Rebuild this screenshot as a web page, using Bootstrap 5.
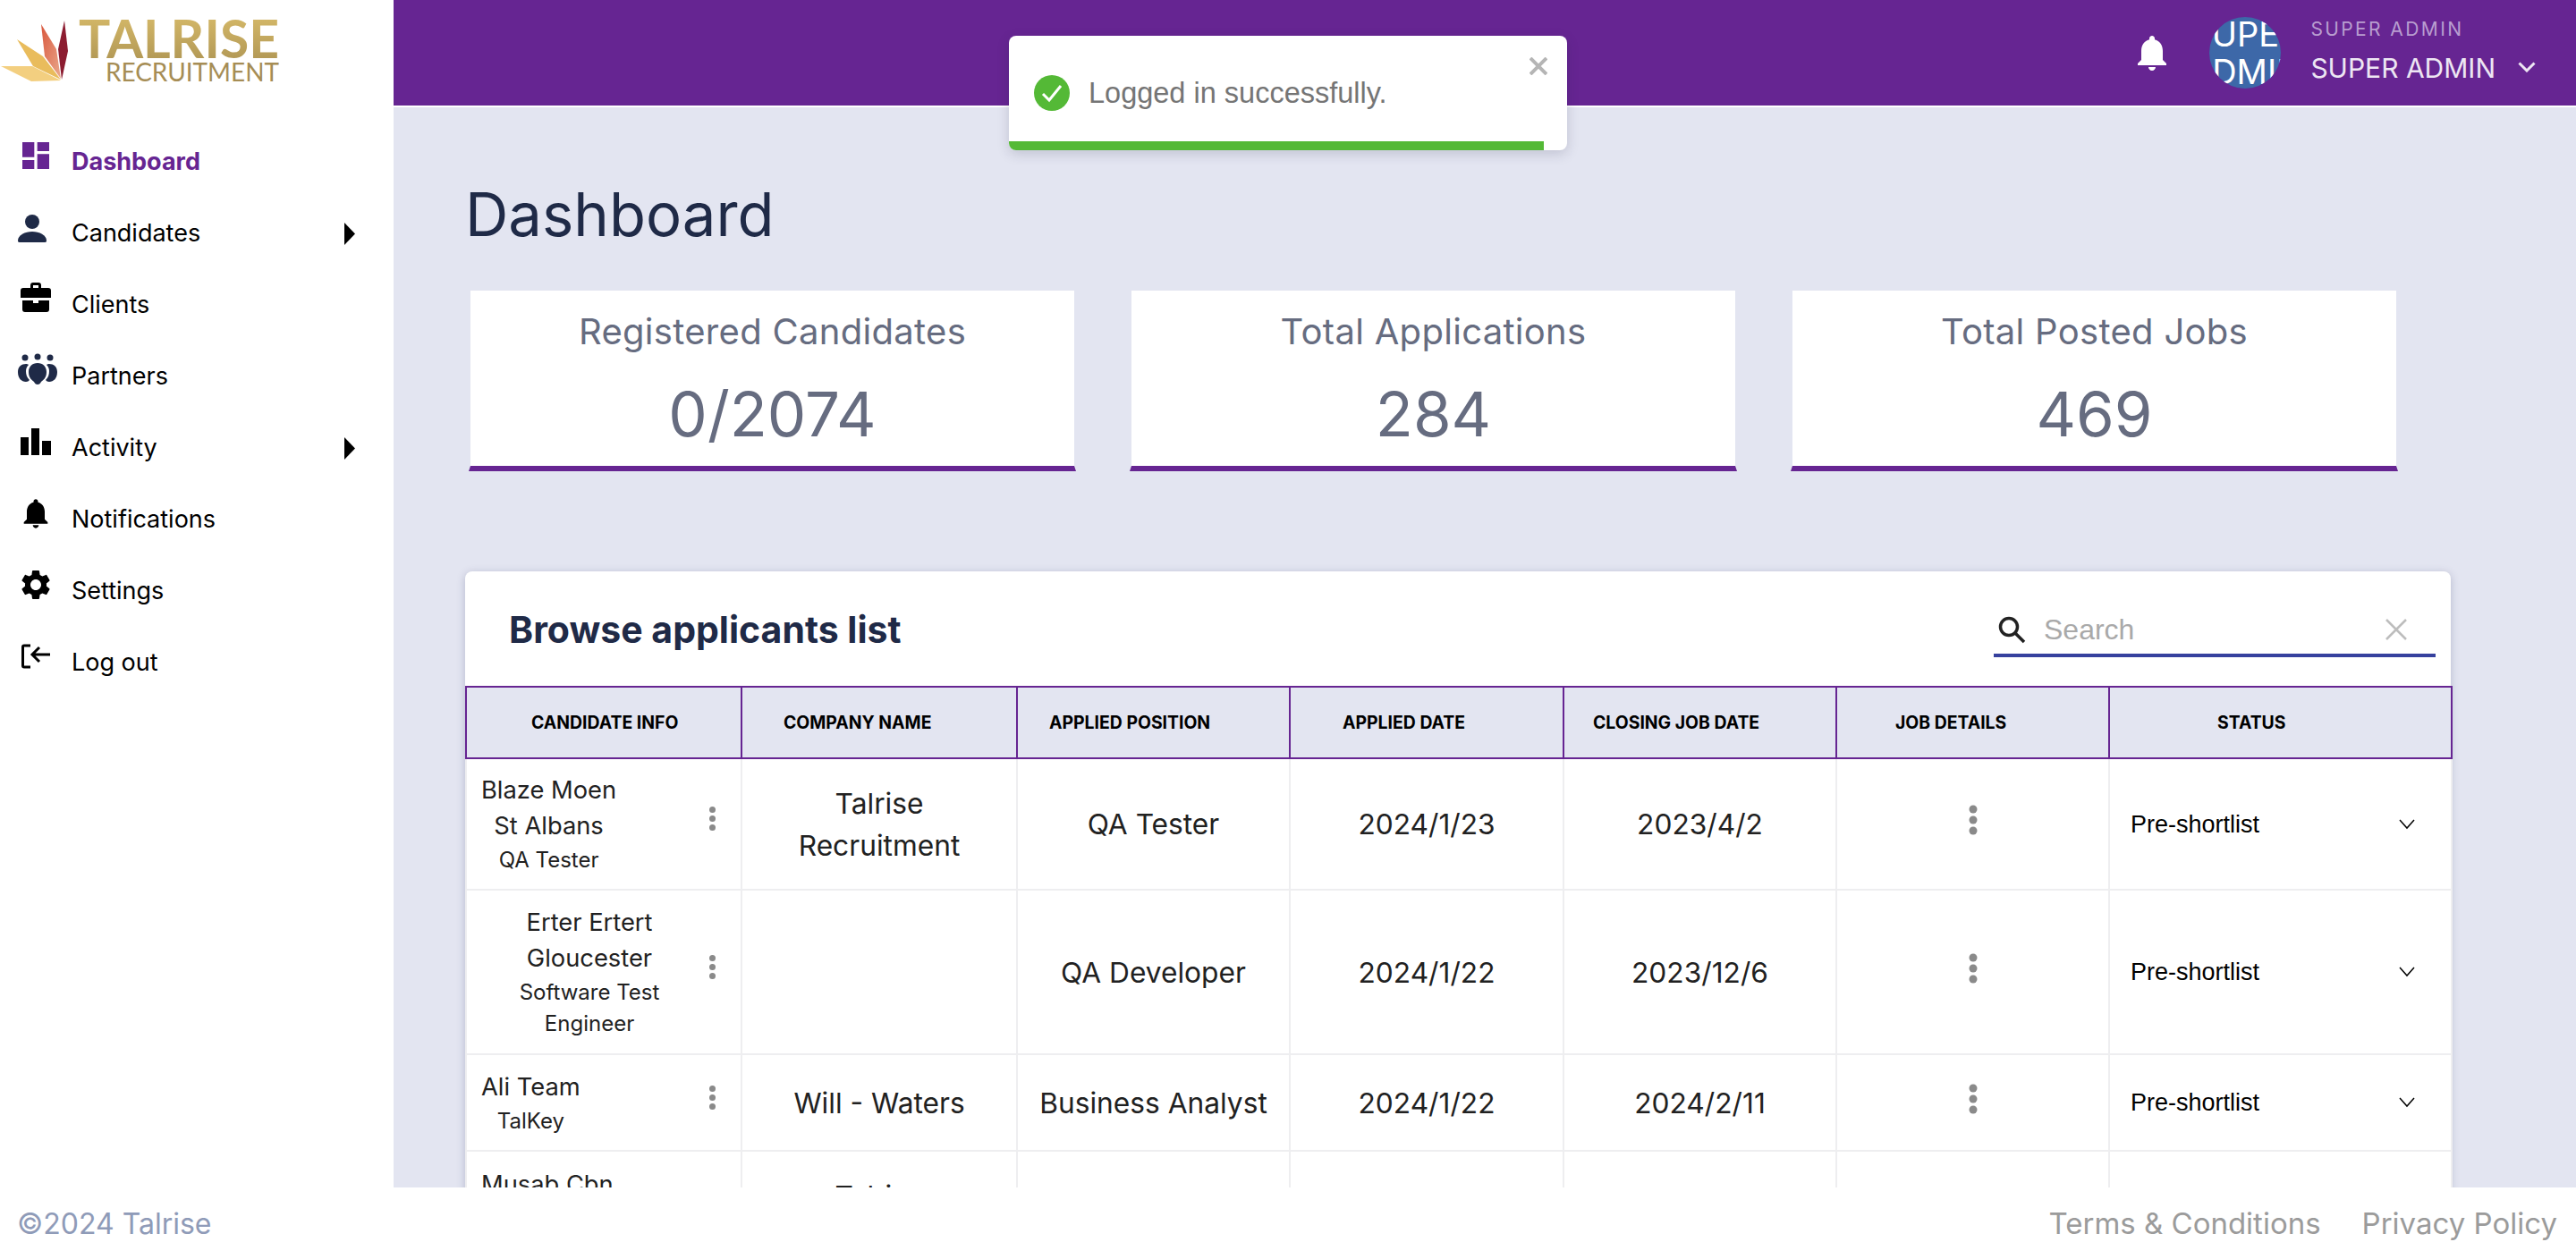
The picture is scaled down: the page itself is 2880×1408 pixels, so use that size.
<!DOCTYPE html>
<html lang="en">
<head>
  <meta charset="UTF-8" />
  <meta name="viewport" content="width=device-width, initial-scale=1" />
  <title>Talrise Recruitment - Dashboard</title>
  <link href="https://cdn.jsdelivr.net/npm/bootstrap@5.3.2/dist/css/bootstrap.min.css" rel="stylesheet">
  <style>
    body { font-family: Inter, "Noto Sans", sans-serif; background: #fff; color: #1f2a47; }
    .side-bar { width: 440px; flex: none; background: #fff; }
    .logo-box { height: 140px; }
    .side-bar .nav-link { height: 80px; padding: 2px 43px 0 20px; gap: 20px; color: #000; font-size: 27px; }
    .side-bar .nav-link svg.ico { width: 40px; height: 40px; margin-bottom: 14px; flex: none; }
    .side-bar .nav-link.active { color: #662592; font-weight: 700; }
    .caret-r { margin-left: auto; width: 12px; height: 25px; }
    .main-area { background: #e3e5f1; min-width: 0; }
    .top-bar { height: 120px; background: #662592; border-bottom: 2px solid #fff; padding-right: 45px; }
    .top-bell { width: 48px; height: 48px; margin-right: 40px; }
    .avatar { width: 80px; height: 80px; border-radius: 50%; background: #3d68a8; color: #fff; font-size: 38px; line-height: 42px; margin-right: 33px; }
    .avatar span { white-space: nowrap; }
    .user-box { margin-bottom: 4px; }
    .user-label { font-size: 21px; letter-spacing: 2.4px; color: #b99dd0; line-height: 26px; font-weight: 400; }
    .user-name { font-size: 30px; color: #ede6f3; line-height: 38px; margin-top: 11px; }
    .user-chev { width: 20px; height: 12px; margin-left: 25px; margin-top: 32px; }
    .page-body { padding: 0 140px 0 80px; }
    .page-title { font-size: 67px; font-weight: 400; color: #1f2a47; margin: 82px 0 0 0; line-height: 76px; height: 121px; }
    .stat-row { margin-left: 4px; gap: 60px; }
    .stat-box { width: 679px; height: 204px; border: 2px solid transparent; border-bottom: 6px solid #662592; background: #fff; background-clip: padding-box; color: #666c80; }
    .stat-label { font-size: 40px; letter-spacing: .3px; line-height: 46px; padding-top: 23px; }
    .stat-value { font-size: 69px; line-height: 76px; margin-top: 31px; }
    .list-card { margin-top: 112px; background: #fff; border-radius: 8px 8px 0 0; box-shadow: 0 2px 10px rgba(60,65,110,.28); }
    .list-head { height: 128px; padding: 0 17px 0 49px; }
    .list-title { font-size: 41px; font-weight: 700; color: #1f2a47; margin: 3px 0 0 0; }
    .search-box { width: 494px; height: 96px; border-bottom: 4px solid #36419e; padding: 38px 32px 0 4px; align-self: flex-start; }
    .search-box input { border: 0; outline: 0; padding: 0 0 0 20px; font: 32px/44px "Liberation Sans", Arial, sans-serif; min-width: 0; flex: 1; color: #333; }
    .search-box input::placeholder { color: #a9a9a9; }
    .app-table { table-layout: fixed; width: 2220px; margin: 0; border-collapse: collapse; }
    .app-table th { height: 80px; background: #e3e5f1; border: 2px solid #662592; font-size: 19.4px; font-weight: 700; color: #000; vertical-align: middle; padding: 2px 0 0 0; white-space: nowrap; }
    .app-table th:nth-child(1) { padding-left: 72px; }
    .app-table th:nth-child(2) { padding-left: 46px; }
    .app-table th:nth-child(3) { padding-left: 35px; }
    .app-table th:nth-child(4) { padding-left: 58px; }
    .app-table th:nth-child(5) { padding-left: 32px; }
    .app-table th:nth-child(6) { padding-left: 65px; }
    .app-table th:nth-child(7) { padding-left: 120px; }
    .app-table td { border: 2px solid #eeeef0; border-top: 0; padding: 0; vertical-align: middle; text-align: center; font-size: 31.7px; line-height: 47px; color: #212121; background: #fff; }
    .app-table tr.rw1 td { height: 147px; }
    .app-table tr.rw2 td { height: 184px; }
    .app-table tr.rw3 td { height: 108px; }
    .app-table tr.rw4 td { height: 147px; vertical-align: top; }
    .app-table td.cell-cand { padding: 0 28px 0 16px; text-align: left; }
    .app-table tr.rw4 td.cell-cand { padding-top: 11px; }
    .app-table tr.rw4 td.cell-co { padding-top: 26px; }
    .cand-info { text-align: center; font-size: 27.3px; line-height: 40px; color: #212121; }
    .cand-info.wide-info { width: 242px; }
    .cand-sub { font-size: 24px; line-height: 35px; margin-top: 0; }
    .dots-sm { width: 7px; height: 27px; margin-bottom: 12px; flex: none; fill: #8a8a8a; }
    .dots-lg { width: 10px; height: 34px; margin-bottom: 12px; fill: #8a8a8a; }
    .status-box { padding: 0 40px 0 23px; font: 27px/30px "Liberation Sans", Arial, sans-serif; color: #000; }
    .status-chev { width: 18px; height: 12px; }
    .page-foot { height: 80px; flex: none; padding: 2px 21px 0 19px; background: #fff; font-size: 32px; }
    .foot-copy { color: #8f9bb8; }
    .foot-links { gap: 46px; color: #9b9b9b; font-size: 33px; }
    .toast-box { left: 1128px; top: 40px; width: 624px; height: 128px; background: #fff; border-radius: 8px; box-shadow: 0 4px 14px rgba(40,40,70,.18); overflow: hidden; z-index: 1050; }
    .toast-check { left: 28px; top: 44px; width: 40px; height: 40px; }
    .toast-text { left: 89px; top: 44px; font: 32.500px/40px "Liberation Sans", Arial, sans-serif; color: #757575; white-space: nowrap; }
    .toast-close { right: 22px; top: 24px; width: 20px; height: 20px; }
    .toast-bar { left: 0; bottom: 0; width: 598px; height: 10px; background: #54b936; }
  </style>
</head>
<body>
<div class="d-flex flex-column vh-100 overflow-hidden position-relative">

  <div class="d-flex flex-grow-1 overflow-hidden">

    <aside class="side-bar">
      <div class="logo-box">
        <svg width="320" height="100" viewBox="0 0 320 100">
          <defs>
            <linearGradient id="goldA" x1="0" y1="0" x2="0" y2="1">
              <stop offset="0" stop-color="#dcbf6c"/>
              <stop offset="1" stop-color="#ab9252"/>
            </linearGradient>
            <linearGradient id="redA" x1="0" y1="0" x2="1" y2="1">
              <stop offset="0" stop-color="#d9583e"/>
              <stop offset="1" stop-color="#eaa98c"/>
            </linearGradient>
          </defs>
          <polygon points="1,74 36,74 68,90 35,91" fill="#f3cf80"/>
          <polygon points="19,44 48,63 68,89 37,74" fill="#e9bc5c"/>
          <polygon points="46,27 63,55 68,88 50,63" fill="url(#redA)"/>
          <polygon points="72,23 76,57 69,89 65,55" fill="#8c1c30"/>
          <text x="88" y="65" font-family="Lato, sans-serif" font-weight="700" font-size="60" textLength="224" lengthAdjust="spacingAndGlyphs" fill="url(#goldA)">TALRISE</text>
          <text x="118" y="91" font-family="Lato, sans-serif" font-size="28" textLength="194" lengthAdjust="spacingAndGlyphs" fill="#a68d55">RECRUITMENT</text>
        </svg>
      </div>
      <nav class="nav flex-column">
        <a class="nav-link active d-flex align-items-center" href="#">
          <svg class="ico" viewBox="0 0 24 24" fill="#662592"><path d="M3 13h8V3H3v10zm0 8h8v-6H3v6zm10 0h8V11h-8v10zm0-18v6h8V3h-8z"/></svg>
          Dashboard
        </a>
        <a class="nav-link d-flex align-items-center" href="#">
          <svg class="ico" viewBox="0 0 40 40" fill="#1f2a47"><circle cx="16" cy="14" r="8"/><path d="M0 35c0-6 8-10 16-10s16 4 16 10c0 2-1 2-3 2H3c-2 0-3 0-3-2z"/></svg>
          Candidates
          <svg class="caret-r" viewBox="0 0 12 25"><polygon points="0,0 12,12.5 0,25" fill="#000"/></svg>
        </a>
        <a class="nav-link d-flex align-items-center" href="#">
          <svg class="ico" viewBox="0 0 40 40" fill="#000"><path d="M14 8V5c0-2 1-3 3-3h6c2 0 3 1 3 3v3h8c2 0 3 1 3 3v8H3v-8c0-2 1-3 3-3zm3 0h6V5h-6z"/><path d="M5 22h12v3h6v-3h12v10c0 2-1 3-3 3H8c-2 0-3-1-3-3z"/></svg>
          Clients
        </a>
        <a class="nav-link d-flex align-items-center" href="#">
          <svg class="ico" style="width:44px;margin-right:-4px" viewBox="0 0 44 40" fill="#1f2a47"><circle cx="8" cy="6" r="3.5"/><circle cx="22" cy="5" r="3.5"/><circle cx="36" cy="6" r="3.5"/><path d="M9 13c-5 0-9 3-9 9 0 7 4 11 9 11 2 0 3-1 4-2-3-3-4-6-4-10 0-3 1-5 3-7-1-1-2-1-3-1z"/><path d="M35 13c5 0 9 3 9 9 0 7-4 11-9 11-2 0-3-1-4-2 3-3 4-6 4-10 0-3-1-5-3-7 1-1 2-1 3-1z"/><path d="M22 12c-6 0-10 4-10 10 0 7 4 9 6 11 1 2 2 3 4 3s3-1 4-3c2-2 6-4 6-11 0-6-4-10-10-10z"/></svg>
          Partners
        </a>
        <a class="nav-link d-flex align-items-center" href="#">
          <svg class="ico" viewBox="0 0 40 40" fill="#000"><rect x="3" y="15" width="9" height="20"/><rect x="15" y="5" width="9" height="30"/><rect x="27" y="19" width="10" height="16"/></svg>
          Activity
          <svg class="caret-r" viewBox="0 0 12 25"><polygon points="0,0 12,12.5 0,25" fill="#000"/></svg>
        </a>
        <a class="nav-link d-flex align-items-center" href="#">
          <svg class="ico" viewBox="0 0 24 24" fill="#000"><path d="M12 22c1.1 0 2-.9 2-2h-4c0 1.1.89 2 2 2zm6-6v-5c0-3.07-1.64-5.64-4.5-6.32V4c0-.83-.67-1.5-1.5-1.5s-1.5.67-1.5 1.5v.68C7.63 5.36 6 7.92 6 11v5l-2 2v1h16v-1l-2-2z"/></svg>
          Notifications
        </a>
        <a class="nav-link d-flex align-items-center" href="#">
          <svg class="ico" viewBox="0 0 24 24" fill="#000"><path d="M19.14 12.94c.04-.3.06-.61.06-.94 0-.32-.02-.64-.07-.94l2.03-1.58c.18-.14.23-.41.12-.61l-1.92-3.32c-.12-.22-.37-.29-.59-.22l-2.39.96c-.5-.38-1.03-.7-1.62-.94l-.36-2.54c-.04-.24-.24-.41-.48-.41h-3.84c-.24 0-.43.17-.47.41l-.36 2.54c-.59.24-1.13.57-1.62.94l-2.39-.96c-.22-.08-.47 0-.59.22L2.74 8.87c-.12.21-.08.47.12.61l2.03 1.58c-.05.3-.09.63-.09.94s.02.64.07.94l-2.03 1.58c-.18.14-.23.41-.12.61l1.92 3.32c.12.22.37.29.59.22l2.39-.96c.5.38 1.03.7 1.62.94l.36 2.54c.05.24.24.41.48.41h3.84c.24 0 .44-.17.47-.41l.36-2.54c.59-.24 1.13-.56 1.62-.94l2.39.96c.22.08.47 0 .59-.22l1.92-3.32c.12-.22.07-.47-.12-.61l-2.01-1.58zM12 15.6c-1.98 0-3.6-1.62-3.6-3.6s1.62-3.6 3.6-3.6 3.6 1.62 3.6 3.6-1.62 3.6-3.6 3.6z"/></svg>
          Settings
        </a>
        <a class="nav-link d-flex align-items-center" href="#">
          <svg class="ico" viewBox="0 0 40 40" fill="none" stroke="#000" stroke-width="3"><path d="M14 8H7c-1 0-1.500.5-1.500 1.500v21c0 1 .5 1.500 1.500 1.500h7"/><path d="M36 18H16M24 10l-8 8 8 8"/></svg>
          Log out
        </a>
      </nav>
    </aside>

    <div class="main-area flex-grow-1 d-flex flex-column overflow-hidden">
      <header class="top-bar d-flex flex-shrink-0 align-items-center justify-content-end">
        <svg class="top-bell" viewBox="0 0 24 24" fill="#fff"><path d="M12 22c1.1 0 2-.9 2-2h-4c0 1.1.89 2 2 2zm6-6v-5c0-3.07-1.64-5.64-4.5-6.32V4c0-.83-.67-1.5-1.5-1.5s-1.5.67-1.5 1.5v.68C7.63 5.36 6 7.92 6 11v5l-2 2v1h16v-1l-2-2z"/></svg>
        <div class="avatar d-flex flex-column align-items-center justify-content-center overflow-hidden">
          <span>SUPER</span>
          <span>ADMIN</span>
        </div>
        <div class="user-box">
          <div class="user-label">SUPER ADMIN</div>
          <div class="user-name">SUPER ADMIN</div>
        </div>
        <svg class="user-chev" viewBox="0 0 20 12" fill="none" stroke="#ede6f3" stroke-width="3"><path d="M1.500 1.500 10 10l8.500-8.500"/></svg>
      </header>

      <main class="page-body flex-grow-1 overflow-hidden">
        <h1 class="page-title">Dashboard</h1>

        <div class="stat-row d-flex">
          <div class="stat-box text-center">
            <div class="stat-label">Registered Candidates</div>
            <div class="stat-value">0/2074</div>
          </div>
          <div class="stat-box text-center">
            <div class="stat-label">Total Applications</div>
            <div class="stat-value">284</div>
          </div>
          <div class="stat-box text-center">
            <div class="stat-label">Total Posted Jobs</div>
            <div class="stat-value">469</div>
          </div>
        </div>

        <section class="list-card">
          <div class="list-head d-flex align-items-center justify-content-between">
            <h2 class="list-title">Browse applicants list</h2>
            <div class="search-box d-flex align-items-center">
              <svg width="32" height="32" viewBox="0 0 32 32" fill="none" stroke="#222" stroke-width="3.500"><circle cx="13" cy="13" r="9.500"/><path d="M20 20l10 10"/></svg>
              <input type="text" placeholder="Search" aria-label="Search">
              <svg width="24" height="24" viewBox="0 0 24 24" fill="none" stroke="#bdbdbd" stroke-width="2.500"><path d="M1 1l22 22M23 1 1 23"/></svg>
            </div>
          </div>

          <table class="app-table">
            <colgroup>
              <col style="width:308px"><col style="width:308px"><col style="width:305px"><col style="width:306px"><col style="width:305px"><col style="width:305px"><col style="width:383px">
            </colgroup>
            <thead>
              <tr>
                <th>CANDIDATE INFO</th>
                <th>COMPANY NAME</th>
                <th>APPLIED POSITION</th>
                <th>APPLIED DATE</th>
                <th>CLOSING JOB DATE</th>
                <th>JOB DETAILS</th>
                <th>STATUS</th>
              </tr>
            </thead>
            <tbody>
              <tr class="rw1">
                <td class="cell-cand">
                  <div class="d-flex align-items-center justify-content-between">
                    <div class="cand-info"><div>Blaze Moen</div><div>St Albans</div><div class="cand-sub">QA Tester</div></div>
                    <svg class="dots-sm" viewBox="0 0 7 27"><circle cx="3.500" cy="3.500" r="3.500"/><circle cx="3.500" cy="13.500" r="3.500"/><circle cx="3.500" cy="23.500" r="3.500"/></svg>
                  </div>
                </td>
                <td>Talrise<br>Recruitment</td>
                <td>QA Tester</td>
                <td>2024/1/23</td>
                <td>2023/4/2</td>
                <td><svg class="dots-lg" viewBox="0 0 10 34"><circle cx="5" cy="5" r="4.500"/><circle cx="5" cy="17" r="4.500"/><circle cx="5" cy="29" r="4.500"/></svg></td>
                <td><div class="status-box d-flex align-items-center justify-content-between">Pre-shortlist<svg class="status-chev" viewBox="0 0 18 12" fill="none" stroke="#000" stroke-width="1.500"><path d="M1 1l8 9 8-9"/></svg></div></td>
              </tr>
              <tr class="rw2">
                <td class="cell-cand">
                  <div class="d-flex align-items-center justify-content-between">
                    <div class="cand-info wide-info"><div>Erter Ertert</div><div>Gloucester</div><div class="cand-sub">Software Test Engineer</div></div>
                    <svg class="dots-sm" viewBox="0 0 7 27"><circle cx="3.500" cy="3.500" r="3.500"/><circle cx="3.500" cy="13.500" r="3.500"/><circle cx="3.500" cy="23.500" r="3.500"/></svg>
                  </div>
                </td>
                <td></td>
                <td>QA Developer</td>
                <td>2024/1/22</td>
                <td>2023/12/6</td>
                <td><svg class="dots-lg" viewBox="0 0 10 34"><circle cx="5" cy="5" r="4.500"/><circle cx="5" cy="17" r="4.500"/><circle cx="5" cy="29" r="4.500"/></svg></td>
                <td><div class="status-box d-flex align-items-center justify-content-between">Pre-shortlist<svg class="status-chev" viewBox="0 0 18 12" fill="none" stroke="#000" stroke-width="1.500"><path d="M1 1l8 9 8-9"/></svg></div></td>
              </tr>
              <tr class="rw3">
                <td class="cell-cand">
                  <div class="d-flex align-items-center justify-content-between">
                    <div class="cand-info"><div>Ali Team</div><div class="cand-sub">TalKey</div></div>
                    <svg class="dots-sm" viewBox="0 0 7 27"><circle cx="3.500" cy="3.500" r="3.500"/><circle cx="3.500" cy="13.500" r="3.500"/><circle cx="3.500" cy="23.500" r="3.500"/></svg>
                  </div>
                </td>
                <td>Will - Waters</td>
                <td>Business Analyst</td>
                <td>2024/1/22</td>
                <td>2024/2/11</td>
                <td><svg class="dots-lg" viewBox="0 0 10 34"><circle cx="5" cy="5" r="4.500"/><circle cx="5" cy="17" r="4.500"/><circle cx="5" cy="29" r="4.500"/></svg></td>
                <td><div class="status-box d-flex align-items-center justify-content-between">Pre-shortlist<svg class="status-chev" viewBox="0 0 18 12" fill="none" stroke="#000" stroke-width="1.500"><path d="M1 1l8 9 8-9"/></svg></div></td>
              </tr>
              <tr class="rw4">
                <td class="cell-cand"><div class="cand-info d-inline-block">Musab Cbn</div></td>
                <td class="cell-co">Talrise</td>
                <td></td><td></td><td></td><td></td><td></td>
              </tr>
            </tbody>
          </table>
        </section>
      </main>
    </div>
  </div>

  <footer class="page-foot d-flex align-items-center justify-content-between">
    <div class="foot-copy">©2024 Talrise</div>
    <div class="foot-links d-flex">
      <span>Terms &amp; Conditions</span>
      <span>Privacy Policy</span>
    </div>
  </footer>

  <div class="toast-box position-absolute">
    <svg class="toast-check position-absolute" viewBox="0 0 40 40"><circle cx="20" cy="20" r="20" fill="#54b936"/><path d="M10 21l7 7 13-16" fill="none" stroke="#fff" stroke-width="3"/></svg>
    <div class="toast-text position-absolute">Logged in successfully.</div>
    <svg class="toast-close position-absolute" viewBox="0 0 20 20" fill="none" stroke="#b5b5b5" stroke-width="4"><path d="M1 1l18 18M19 1 1 19"/></svg>
    <div class="toast-bar position-absolute"></div>
  </div>

</div>
</body>
</html>
